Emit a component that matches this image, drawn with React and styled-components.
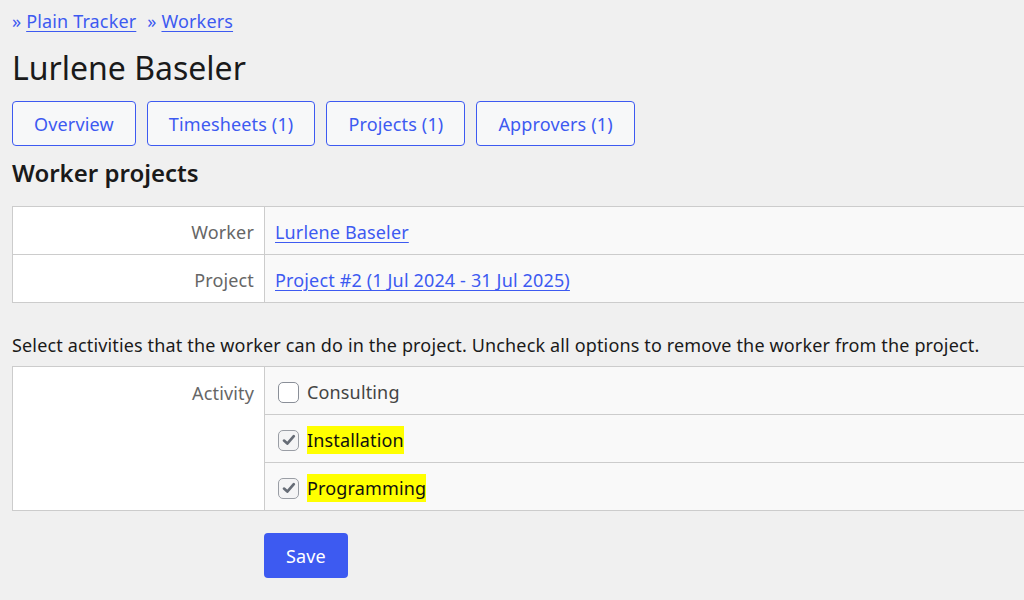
import React, {useState} from "react";
import styled, {createGlobalStyle} from 'styled-components';

const GlobalStyle = createGlobalStyle`
  html, body {
    margin: 0;
    background: #f0f0f0;
    overflow: hidden;
  }
  body {
    font-family: "Noto Sans", "Liberation Sans", sans-serif;
    font-size: 18px;
    letter-spacing: 0.15px;
    color: #1a1a1a;
  }
`;

const Page = styled.div`
  padding: 6px 0 0 12px;
  width: 1040px;
`;

const Breadcrumbs = styled.nav`
  display: flex;
  gap: 11px;
  line-height: 30px;
  color: #3d5af1;
`;

const Crumb = styled.span`
  &::before {
    content: "» ";
  }
`;

const Link = styled.a`
  color: #3d5af1;
  text-decoration: underline;
  text-decoration-thickness: 1px;
  text-underline-offset: 3px;
  cursor: pointer;
`;

const Title = styled.h1`
  font-size: 32px;
  font-weight: 400;
  letter-spacing: 0;
  margin: 10px 0 11px;
  line-height: 44px;
`;

const Tabs = styled.div`
  display: flex;
  gap: 11px;
`;

const Tab = styled.button`
  font: inherit;
  letter-spacing: inherit;
  height: 45px;
  padding: 0 21px;
  border: 1px solid #3d5af1;
  border-radius: 4px;
  background: #f7f8f9;
  color: #3d5af1;
  cursor: pointer;
`;

const SectionTitle = styled.h2`
  font-size: 24px;
  font-weight: 600;
  letter-spacing: 0;
  margin: 11px 0 17px;
  line-height: 32px;
`;

const Table = styled.table`
  border-collapse: collapse;
  width: 1030px;
  margin-bottom: ${props => props.$gap || 0}px;
`;

const Label = styled.th`
  width: 231px;
  text-align: right;
  font-weight: 400;
  color: #666;
  background: #fff;
  border: 1px solid #ccc;
  padding: ${props => props.$top ? '4px' : '3px'} 10px 0;
  height: 44px;
  vertical-align: ${props => props.$top ? 'top' : 'middle'};
  line-height: 44px;
`;

const Value = styled.td`
  background: #f9f9f9;
  border: 1px solid #ccc;
  padding: 3px 10px 0;
  height: 44px;
  line-height: 26px;
`;

const Hint = styled.p`
  margin: 0 0 8px;
  line-height: 26px;
`;

const Option = styled.label`
  display: flex;
  align-items: center;
  gap: 8px;
  padding-left: 3px;
  cursor: pointer;
  color: ${props => props.$on ? '#111' : '#444'};
`;

const Box = styled.span`
  width: 21px;
  height: 21px;
  box-sizing: border-box;
  border: 1px solid ${props => props.$on ? '#9a9ea5' : '#8a8f98'};
  border-radius: 5px;
  background: ${props => props.$on ? '#f4f4f5' : '#fff'};
  display: flex;
  align-items: center;
  justify-content: center;
`;

const Mark = styled.span`
  background: ${props => props.$on ? '#ffff00' : 'transparent'};
  line-height: 28px;
`;

const Actions = styled.div`
  padding: 22px 0 0 252px;
`;

const SaveButton = styled.button`
  font: inherit;
  letter-spacing: inherit;
  height: 45px;
  padding: 0 22px;
  border: none;
  border-radius: 4px;
  background: #3d5af1;
  color: #fff;
  cursor: pointer;
`;

const activities = ['Consulting', 'Installation', 'Programming'];

function Checkbox({checked}) {
    return (
        <Box $on={checked}>
            {checked && (
                <svg width="16" height="16" viewBox="0 0 16 16">
                    <path d="M3 8.6 L6.3 11.6 L12.8 4.2" fill="none" stroke="#666c76" strokeWidth="2.7" strokeLinecap="round" strokeLinejoin="round"/>
                </svg>
            )}
        </Box>
    );
}

export default function App() {
    const [selected, setSelected] = useState({Installation: true, Programming: true});

    const toggle = (name) => {
        setSelected({...selected, [name]: !selected[name]});
    };

    return (
        <Page>
            <GlobalStyle/>
            <Breadcrumbs>
                <Crumb><Link>Plain Tracker</Link></Crumb>
                <Crumb><Link>Workers</Link></Crumb>
            </Breadcrumbs>
            <Title>Lurlene Baseler</Title>
            <Tabs>
                <Tab>Overview</Tab>
                <Tab>Timesheets (1)</Tab>
                <Tab>Projects (1)</Tab>
                <Tab>Approvers (1)</Tab>
            </Tabs>
            <SectionTitle>Worker projects</SectionTitle>
            <Table $gap={29}>
                <tbody>
                <tr>
                    <Label>Worker</Label>
                    <Value><Link>Lurlene Baseler</Link></Value>
                </tr>
                <tr>
                    <Label>Project</Label>
                    <Value><Link>Project #2 (1 Jul 2024 - 31 Jul 2025)</Link></Value>
                </tr>
                </tbody>
            </Table>
            <Hint>Select activities that the worker can do in the project. Uncheck all options to remove the worker from the project.</Hint>
            <Table>
                <tbody>
                {activities.map((name, i) => (
                    <tr key={name}>
                        {i === 0 && <Label $top rowSpan={activities.length}>Activity</Label>}
                        <Value>
                            <Option $on={selected[name]} onClick={() => toggle(name)}>
                                <Checkbox checked={selected[name]}/>
                                <Mark $on={selected[name]}>{name}</Mark>
                            </Option>
                        </Value>
                    </tr>
                ))}
                </tbody>
            </Table>
            <Actions>
                <SaveButton>Save</SaveButton>
            </Actions>
        </Page>
    );
}
